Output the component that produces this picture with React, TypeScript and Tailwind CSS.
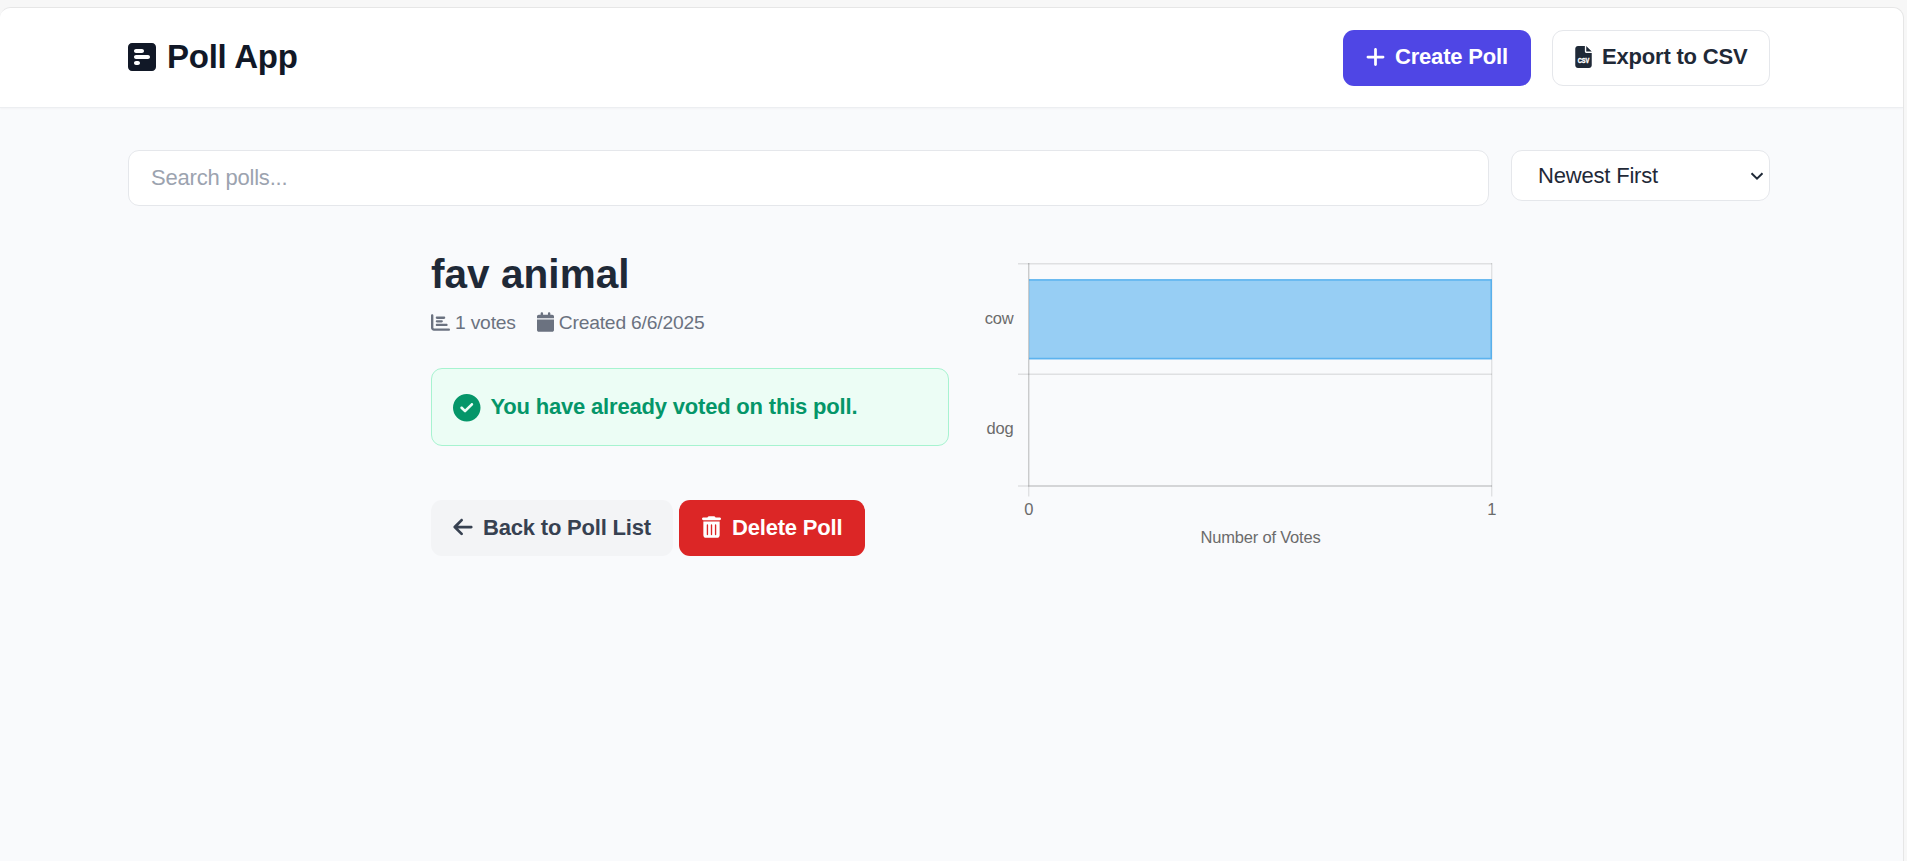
import {
  FaArrowLeft,
  FaCalendar,
  FaChartBar,
  FaCircleCheck,
  FaPlus,
  FaSquarePollHorizontal,
  FaTrashCan,
} from "react-icons/fa6";

function CsvFileIcon() {
  return (
    <svg className="mt-px h-[22px] w-[17px] shrink-0" viewBox="0 0 384 512" fill="currentColor">
      <path d="M0 64C0 28.700 28.700 0 64 0H224V128c0 17.700 14.300 32 32 32H384V448c0 35.300-28.700 64-64 64H64c-35.300 0-64-28.700-64-64V64zM384 128H256V0L384 128z" />
      <text
        x="192"
        y="386"
        fill="#ffffff"
        stroke="#ffffff"
        strokeWidth="10"
        fontSize="170"
        fontWeight="700"
        textAnchor="middle"
        textLength="270"
        lengthAdjust="spacingAndGlyphs"
        letterSpacing="0"
      >
        CSV
      </text>
    </svg>
  );
}

function Header() {
  return (
    <header className="flex h-[100px] items-center justify-between border-b border-[#eceef1] bg-white pr-[133px] pl-32 shadow-[0_1px_2px_rgba(0,0,0,0.03)]">
      <div className="flex items-center pb-[2px] text-[#111827]">
        <FaSquarePollHorizontal className="h-8 w-7" />
        <h1 className="ml-[11px] text-[33px] leading-[44px] font-bold tracking-[-0.25px]">Poll App</h1>
      </div>
      <div className="flex items-center gap-[21px]">
        <button className="flex h-14 w-[188px] items-center rounded-[11px] bg-[#4f46e5] pb-[2px] pl-[22px] font-bold text-white">
          <FaPlus className="h-[22px] w-[21px]" />
          <span className="ml-[9px] whitespace-nowrap">Create Poll</span>
        </button>
        <button className="flex h-14 w-[218px] items-center rounded-[11px] border border-[#e5e7eb] bg-white pb-[2px] pl-[22px] font-bold text-[#1f2937]">
          <CsvFileIcon />
          <span className="ml-[10px] whitespace-nowrap">Export to CSV</span>
        </button>
      </div>
    </header>
  );
}

function Toolbar() {
  return (
    <div className="flex items-start gap-[22px] pr-[133px] pl-32">
      <input
        className="h-14 flex-1 rounded-[11px] border border-[#e5e7eb] bg-white px-[22px] tracking-[-0.2px] placeholder:text-[#9ca3af]"
        placeholder="Search polls..."
      />
      <button className="flex h-[51px] w-[259px] items-center justify-between rounded-[11px] border border-[#e5e7eb] bg-white pr-[5px] pl-[26px]">
        <span>Newest First</span>
        <svg className="h-[14px] w-[14px]" viewBox="0 0 14 14" fill="none" stroke="#1f2937" strokeWidth="2">
          <path d="M1.500 4.200 7 9.700l5.500-5.500" />
        </svg>
      </button>
    </div>
  );
}

function PollDetails() {
  return (
    <section className="w-[518px]">
      <h2 className="pt-px text-[40.5px] leading-[50px] font-bold tracking-[0.05px]">fav animal</h2>
      <div className="mt-[9px] flex h-7 items-center text-[19.25px] tracking-[-0.19px] text-[#6b7280]">
        <FaChartBar className="size-[19px]" />
        <span className="ml-[5px]">1 votes</span>
        <FaCalendar className="ml-[21px] h-[20px] w-[17px]" />
        <span className="ml-[5px]">Created 6/6/2025</span>
      </div>
      <div className="mt-[32px] flex h-[78px] items-center rounded-[11px] border border-[#a7f3d0] bg-[#ecfdf5] pl-[21px] font-bold text-[#059669]">
        <FaCircleCheck className="mt-[2px] size-[27.5px]" />
        <span className="ml-[10px] pb-[2px]">You have already voted on this poll.</span>
      </div>
      <div className="mt-[54px] flex gap-[6px]">
        <button className="flex h-14 w-[242px] items-center rounded-[11px] bg-[#f3f4f6] pb-[2px] pl-[22px] font-bold text-[#374151]">
          <FaArrowLeft className="h-[22px] w-[20px]" />
          <span className="ml-[10px] whitespace-nowrap">Back to Poll List</span>
        </button>
        <button className="flex h-14 w-[186px] items-center rounded-[11px] bg-[#dc2626] pb-[2px] pl-[23px] font-bold text-white">
          <FaTrashCan className="h-[22px] w-[19px]" />
          <span className="ml-[11px] whitespace-nowrap">Delete Poll</span>
        </button>
      </div>
    </section>
  );
}

function VotesChart() {
  return (
    <svg className="mt-[9px] h-[300px] w-[530px] text-[16.5px]" viewBox="970 257 530 300" fill="#6b6b6b">
      <g stroke="#000000" strokeOpacity="0.1" strokeWidth="1.375">
        <path d="M1018 263.700H1492M1018 374.300H1492M1018 486H1492" />
        <path d="M1028.700 263V496.500M1491.700 263V496.500" />
        <path d="M1028.700 263V486.500M1028 486H1492" />
      </g>
      <rect x="1029" y="279" width="463" height="80.500" fill="#36a2eb" fillOpacity="0.5" />
      <path d="M1029 280H1491.200V358.500H1029" fill="none" stroke="#36a2eb" strokeOpacity="0.6" strokeWidth="1.500" />
      <text x="1013.500" y="324" textAnchor="end">cow</text>
      <text x="1013.500" y="434" textAnchor="end">dog</text>
      <text x="1028.700" y="515" textAnchor="middle">0</text>
      <text x="1491.700" y="515" textAnchor="middle">1</text>
      <text x="1260.500" y="543" textAnchor="middle">Number of Votes</text>
    </svg>
  );
}

export default function App() {
  return (
    <div className="h-[861px] overflow-hidden bg-[#f7f7f7] pt-[7px] font-['Liberation_Sans',Arial,sans-serif] text-[22px] leading-[33px] tracking-[-0.19px] text-[#1f2937]">
      <div className="h-[880px] w-[1904px] overflow-hidden rounded-t-[11px] border-t border-r border-[#e6e6e6] bg-[#f9fafc]">
        <Header />
        <main className="pt-[42px]">
          <Toolbar />
          <div className="flex items-start gap-[21px] pt-[42px] pl-[431px]">
            <PollDetails />
            <VotesChart />
          </div>
        </main>
      </div>
    </div>
  );
}
